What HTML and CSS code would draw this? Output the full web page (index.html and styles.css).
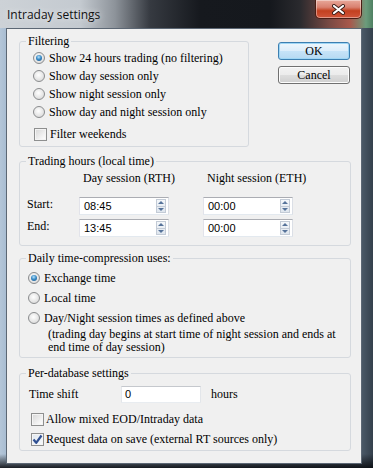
FILE: index.html
```html
<!DOCTYPE html>
<html lang="en">
<head>
    <meta charset="UTF-8">
    <title>Intraday settings</title>
    <link rel="stylesheet" href="styles.css">
</head>
<body>
    <div class="window">
        <div class="titlebar">
            <span class="title">Intraday settings</span>
            <div class="close">
                <svg width="13" height="11" viewBox="0 0 13 11">
                    <path d="M2 2 L11 9 M11 2 L2 9" stroke="#3a1c16" stroke-width="4" stroke-linecap="round"/>
                    <path d="M2 2 L11 9 M11 2 L2 9" stroke="#ffffff" stroke-width="2.2" stroke-linecap="round"/>
                </svg>
            </div>
        </div>
        <div class="client">
            <div class="top">
                <fieldset class="group filtering">
                    <legend>Filtering</legend>
                    <div class="box">
                        <div class="opt"><span class="radio on"></span>Show 24 hours trading (no filtering)</div>
                        <div class="opt"><span class="radio"></span>Show day session only</div>
                        <div class="opt"><span class="radio"></span>Show night session only</div>
                        <div class="opt"><span class="radio"></span>Show day and night session only</div>
                        <div class="opt chk weekends"><span class="check"></span>Filter weekends</div>
                    </div>
                </fieldset>
                <div class="buttons">
                    <button class="btn default" type="button">OK</button>
                    <button class="btn" type="button">Cancel</button>
                </div>
            </div>

            <fieldset class="group hours">
                <legend>Trading hours (local time)</legend>
                <div class="box hours-grid">
                    <span></span>
                    <span class="col-head">Day session (RTH)</span>
                    <span class="col-head">Night session (ETH)</span>

                    <span class="row-label">Start:</span>
                    <div class="field"><span>08:45</span><span class="spin"><i class="up"></i><i class="down"></i></span></div>
                    <div class="field"><span>00:00</span><span class="spin"><i class="up"></i><i class="down"></i></span></div>

                    <span class="row-label">End:</span>
                    <div class="field"><span>13:45</span><span class="spin"><i class="up"></i><i class="down"></i></span></div>
                    <div class="field"><span>00:00</span><span class="spin"><i class="up"></i><i class="down"></i></span></div>
                </div>
            </fieldset>

            <fieldset class="group daily">
                <legend>Daily time-compression uses:</legend>
                <div class="box">
                    <div class="opt"><span class="radio on"></span>Exchange time</div>
                    <div class="opt"><span class="radio"></span>Local time</div>
                    <div class="opt"><span class="radio"></span>Day/Night session times as defined above</div>
                    <p class="note">(trading day begins at start time of night session and ends at<br>end time of day session)</p>
                </div>
            </fieldset>

            <fieldset class="group perdb">
                <legend>Per-database settings</legend>
                <div class="box">
                    <div class="shift">
                        <span class="shift-label">Time shift</span>
                        <div class="field plain"><span>0</span></div>
                        <span class="unit">hours</span>
                    </div>
                    <div class="opt chk mixed"><span class="check"></span>Allow mixed EOD/Intraday data</div>
                    <div class="opt chk"><span class="check on">
                        <svg width="11" height="11" viewBox="0 0 11 11">
                            <path d="M1.5 5.5 L4.2 8.8 L9.5 1.5" fill="none" stroke="#2f4f91" stroke-width="2.2" stroke-linejoin="round"/>
                        </svg>
                    </span>Request data on save (external RT sources only)</div>
                </div>
            </fieldset>
        </div>
    </div>
</body>
</html>
```

FILE: styles.css
```css
body {
    margin: 0;
    font-family: "Liberation Serif", serif;
    font-size: 12px;
    color: #000;
    background: #1c2026;
}
.window {
    width: 373px;
    height: 468px;
    display: flex;
    flex-direction: column;
    background:
        linear-gradient(to top, rgba(10, 12, 16, 0.9) 0, rgba(10, 12, 16, 0) 14px),
        linear-gradient(to right, #b4c6d8 0, #a9bdd2 6px, #4a5866 362px, #34404c 100%);
}
.titlebar {
    height: 28px;
    display: flex;
    align-items: flex-start;
    padding: 0 11px 0 7px;
    background: linear-gradient(to right, #cdd2d7 0, #c4cad0 80px, #8d939a 115px, #363a41 150px, #16191e 200px, #15181d 270px, #2a2a2e 300px, #7a4a44 330px, #a8584c 350px, #6b9c7c 366px, #4f8062 373px);
}
.title {
    flex: 1;
    line-height: 29px;
    font-family: "Open Sans", sans-serif;
    font-size: 12px;
    color: #111;
    text-shadow: 0 0 6px rgba(255, 255, 255, 0.8);
}
.close {
    width: 47px;
    height: 19px;
    box-sizing: border-box;
    display: flex;
    align-items: center;
    justify-content: center;
    border: 1px solid #4a1d14;
    border-top: none;
    border-radius: 0 0 5px 5px;
    background: linear-gradient(#e8a89a 0, #d98170 40%, #c3401f 60%, #d0553a 100%);
    box-shadow: inset 0 0 0 1px rgba(255, 255, 255, 0.4);
}
.client {
    flex: 1;
    margin: 0 11px 4px 6px;
    padding: 5px 10px 0 12px;
    border: 1px solid #5c6774;
    background: #f0f0f0;
}
.top {
    display: flex;
    align-items: flex-start;
}
.group {
    margin: 0;
    padding: 0;
    min-width: 0;
    border: 1px solid #d5d9de;
    border-radius: 3px;
}
legend {
    margin-left: 6px;
    padding: 0 2px;
    line-height: 14px;
}
.opt {
    display: flex;
    align-items: center;
    gap: 4px;
    height: 18px;
    white-space: nowrap;
}
.radio {
    width: 12px;
    height: 12px;
    box-sizing: border-box;
    border: 1px solid #8a8c8e;
    border-radius: 50%;
    background: radial-gradient(circle at 45% 40%, #ffffff 0, #e6e6e6 55%, #cfcfcf 100%);
    display: inline-flex;
    align-items: center;
    justify-content: center;
    flex: none;
}
.radio.on::after {
    content: "";
    width: 6px;
    height: 6px;
    border-radius: 50%;
    background: radial-gradient(circle at 45% 35%, #b9e3fb 0, #3b8cc7 45%, #164f82 100%);
}
.check {
    width: 13px;
    height: 13px;
    box-sizing: border-box;
    border: 1px solid #8e8f8f;
    background: linear-gradient(135deg, #d6d6d6 0, #f4f4f4 70%, #ffffff 100%);
    box-shadow: inset 0 0 0 1px #f4f4f4;
    display: inline-flex;
    align-items: center;
    justify-content: center;
    flex: none;
}
.check.on {
    background: linear-gradient(135deg, #dfe6ee 0, #f8fafc 100%);
}
.chk {
    gap: 2px;
}

/* Filtering */
.filtering {
    width: 230px;
    box-sizing: border-box;
}
.filtering .box {
    padding: 1px 8px 3px 13px;
}
.weekends {
    margin-top: 4px;
    padding-left: 1px;
    gap: 3px;
}
.buttons {
    margin: 8px 0 0 29px;
    display: flex;
    flex-direction: column;
    gap: 6px;
}
.btn {
    width: 72px;
    height: 18px;
    padding: 0;
    font-family: "Liberation Serif", serif;
    font-size: 12px;
    color: #000;
    border: 1px solid #707070;
    border-radius: 3px;
    background: linear-gradient(#f2f2f2 0, #ebebeb 50%, #dddddd 51%, #cfcfcf 100%);
    box-shadow: inset 0 0 0 1px #fcfcfc;
}
.btn.default {
    border-color: #3c7fb1;
    background: linear-gradient(#eef7fd 0, #dcedfa 50%, #c6e3f8 51%, #b6d9f2 100%);
    box-shadow: inset 0 0 0 1px #9fd6f5;
}

/* Trading hours */
.hours {
    margin-top: 7px;
}
.hours-grid {
    padding: 3px 8px 8px 7px;
    display: grid;
    grid-template-columns: 52px 124px 90px;
    row-gap: 4px;
}
.col-head {
    padding-left: 4px;
    line-height: 14px;
    margin-bottom: 8px;
    white-space: nowrap;
}
.row-label {
    line-height: 14px;
}
.field {
    width: 90px;
    height: 18px;
    box-sizing: border-box;
    border: 1px solid;
    border-color: #abadb3 #dbdfe6 #e3e9ef #e2e3ea;
    background: #fff;
    display: flex;
    align-items: center;
    justify-content: space-between;
    padding: 0 2px 0 4px;
    font-family: "Liberation Sans", sans-serif;
    font-size: 11px;
}
.spin {
    width: 10px;
    height: 14px;
    display: flex;
    flex-direction: column;
    border: 1px solid #c3cbd6;
    box-sizing: border-box;
    background: linear-gradient(#f4f7fa, #dfe6ee);
}
.spin i {
    flex: 1;
    display: flex;
    align-items: center;
    justify-content: center;
}
.spin i.up {
    border-bottom: 1px solid #c3cbd6;
}
.spin i::after {
    content: "";
    border-left: 3px solid transparent;
    border-right: 3px solid transparent;
}
.spin i.up::after {
    border-bottom: 3px solid #56739a;
}
.spin i.down::after {
    border-top: 3px solid #56739a;
}

/* Daily time-compression */
.daily {
    margin-top: 5px;
}
.daily .box {
    padding: 3px 8px 3px 8px;
}
.daily .opt {
    height: 20px;
}
.note {
    margin: 0 0 0 20px;
    line-height: 13px;
    white-space: nowrap;
}

/* Per-database */
.perdb {
    margin-top: 8px;
}
.perdb .box {
    padding: 4px 8px 1px 9px;
}
.shift {
    display: flex;
    align-items: center;
    height: 20px;
}
.shift-label {
    width: 92px;
}
.field.plain {
    width: 80px;
    height: 17px;
    padding-left: 3px;
    border-color: #c5c8cd #e3e6ea #e8ecf0 #e3e6ea;
}
.unit {
    margin-left: 10px;
}
.perdb .chk {
    height: 20px;
    padding-left: 2px;
}
.mixed {
    margin-top: 5px;
}
```
